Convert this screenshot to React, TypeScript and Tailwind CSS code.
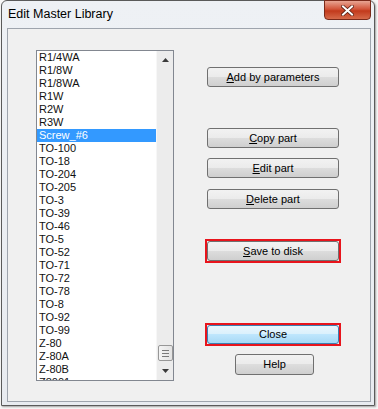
import React from 'react';

const items = [
  'R1/4WA', 'R1/8W', 'R1/8WA', 'R1W', 'R2W', 'R3W', 'Screw_#6', 'TO-100', 'TO-18', 'TO-204',
  'TO-205', 'TO-3', 'TO-39', 'TO-46', 'TO-5', 'TO-52', 'TO-71', 'TO-72', 'TO-78', 'TO-8',
  'TO-92', 'TO-99', 'Z-80', 'Z-80A', 'Z-80B', 'Z8001',
];

const btn =
  'w-full h-[20px] rounded-[3px] border border-[#707070] bg-[linear-gradient(#f2f2f2_0%,#ebebeb_50%,#dddddd_50%,#cfcfcf_100%)] text-[11px] text-black flex items-center justify-center';

function Btn({ pre, u, rest }: { pre?: string; u: string; rest: string }) {
  return (
    <div className={btn}>
      {pre}
      <span className="underline underline-offset-1">{u}</span>
      {rest}
    </div>
  );
}

export default function App() {
  return (
    <div className="w-[378px] h-[409px] bg-[#f7f7f7] relative font-['Liberation_Sans',sans-serif] overflow-hidden">
      {/* window frame */}
      <div className="absolute left-[1px] top-0 w-[374px] h-[406px] border border-[#5a5a5a] rounded-t-[6px] bg-[linear-gradient(#eef1f5,#e8ebf0)] flex flex-col shadow-[1px_1px_2px_rgba(0,0,0,0.35)]">
        <div className="h-[27px] flex items-center pl-[6px] relative">
          <span className="text-[12.5px] text-black">Edit Master Library</span>
          {/* close button */}
          <div className="absolute right-[3px] top-[-1px] w-[47px] h-[20px] rounded-b-[4px] border border-[#7a2a1a] bg-[linear-gradient(#e8a593_0%,#d2553a_45%,#c23a1c_55%,#d66a4a_100%)] flex items-center justify-center">
            <svg width="13" height="11" viewBox="0 0 13 11">
              <path d="M2 1.5 L11 9.5 M11 1.5 L2 9.5" stroke="#5a2014" strokeWidth="3.6" strokeLinecap="square" />
              <path d="M2 1.5 L11 9.5 M11 1.5 L2 9.5" stroke="#ffffff" strokeWidth="2" strokeLinecap="square" />
            </svg>
          </div>
        </div>
        {/* client area */}
        <div className="ml-[5px] w-[364px] h-[374px] border border-[#9ea4ad] bg-[#f0f0f0] flex pt-[21px] pl-[28px]">
          {/* listbox */}
          <div className="w-[138px] h-[331px] border border-[#828790] bg-white flex overflow-hidden">
            <div className="flex-1 overflow-hidden">
              {items.map((it) => (
                <div
                  key={it}
                  className={
                    'h-[13px] leading-[13px] text-[11px] pl-[2px] ' +
                    (it === 'Screw_#6' ? 'bg-[#3399ff] text-white' : 'text-[#111]')
                  }
                >
                  {it}
                </div>
              ))}
            </div>
            {/* scrollbar */}
            <div className="w-[17px] h-full bg-[#ececec] border-l border-[#f7f7f7] flex flex-col items-center">
              <div className="h-[17px] flex items-center justify-center">
                <svg width="7" height="4" viewBox="0 0 7 4"><path d="M3.5 0 L7 4 L0 4 Z" fill="#3a3a3a" /></svg>
              </div>
              <div className="flex-1" />
              <div className="w-[15px] h-[16px] rounded-[2px] border border-[#979797] bg-[linear-gradient(90deg,#f4f4f4,#e3e3e3)] flex flex-col items-center justify-center gap-[2px]">
                <div className="w-[7px] h-[1px] bg-[#7a7a7a]" />
                <div className="w-[7px] h-[1px] bg-[#7a7a7a]" />
                <div className="w-[7px] h-[1px] bg-[#7a7a7a]" />
              </div>
              <div className="h-[19px] flex items-center justify-center">
                <svg width="7" height="4" viewBox="0 0 7 4"><path d="M0 0 L7 0 L3.5 4 Z" fill="#3a3a3a" /></svg>
              </div>
            </div>
          </div>
          {/* buttons */}
          <div className="ml-[33px] w-[132px] flex flex-col pt-[17px]">
            <Btn u="A" rest="dd by parameters" />
            <div className="h-[41px]" />
            <Btn u="C" rest="opy part" />
            <div className="h-[10px]" />
            <Btn u="E" rest="dit part" />
            <div className="h-[11px]" />
            <Btn u="D" rest="elete part" />
            <div className="h-[30px]" />
            <div className="-mx-[2px] border-2 border-[#e8141c]">
              <Btn u="S" rest="ave to disk" />
            </div>
            <div className="h-[60px]" />
            <div className="-mx-[2px] border-2 border-[#e8141c]">
              <div className="w-full h-[19px] rounded-[3px] border border-[#3c7fb1] bg-[linear-gradient(#eaf6fd_0%,#d9f0fc_50%,#bee6fd_50%,#a7d9f5_100%)] text-[11px] text-black flex items-center justify-center">
                Close
              </div>
            </div>
            <div className="h-[8px]" />
            <div className="ml-[28px] w-[79px]">
              <div className={btn + ' h-[21px]'}>Help</div>
            </div>
          </div>
        </div>
      </div>
    </div>
  );
}
